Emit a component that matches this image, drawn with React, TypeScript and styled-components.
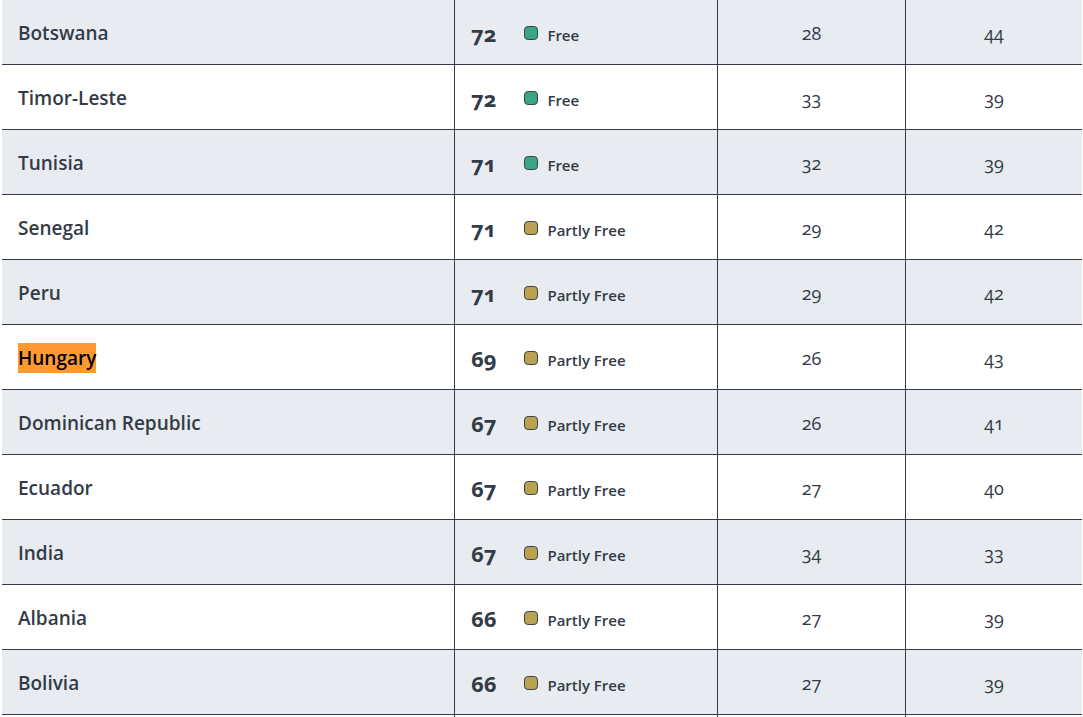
import React from 'react';
import styled, { createGlobalStyle } from 'styled-components';

type Status = 'Free' | 'Partly Free';

interface Row {
    country: string;
    score: number;
    status: Status;
    pr: number;
    cl: number;
    highlight?: boolean;
}

const rows: Row[] = [
    { country: 'Botswana', score: 72, status: 'Free', pr: 28, cl: 44 },
    { country: 'Timor-Leste', score: 72, status: 'Free', pr: 33, cl: 39 },
    { country: 'Tunisia', score: 71, status: 'Free', pr: 32, cl: 39 },
    { country: 'Senegal', score: 71, status: 'Partly Free', pr: 29, cl: 42 },
    { country: 'Peru', score: 71, status: 'Partly Free', pr: 29, cl: 42 },
    { country: 'Hungary', score: 69, status: 'Partly Free', pr: 26, cl: 43, highlight: true },
    { country: 'Dominican Republic', score: 67, status: 'Partly Free', pr: 26, cl: 41 },
    { country: 'Ecuador', score: 67, status: 'Partly Free', pr: 27, cl: 40 },
    { country: 'India', score: 67, status: 'Partly Free', pr: 34, cl: 33 },
    { country: 'Albania', score: 66, status: 'Partly Free', pr: 27, cl: 39 },
    { country: 'Bolivia', score: 66, status: 'Partly Free', pr: 27, cl: 39 },
];

const GlobalStyle = createGlobalStyle`
  html, body {
    margin: 0;
    padding: 0;
    background: #ffffff;
    overflow: hidden;
  }
  body {
    font-family: "Open Sans", "Noto Sans", sans-serif;
    color: #333b47;
  }
`;

const Table = styled.div`
  margin-left: 2px;
  width: 1080px;
`;

const TableRow = styled.div<{ $shaded: boolean }>`
  display: grid;
  grid-template-columns: 452px 263px 188px 177px;
  height: 65px;
  box-sizing: border-box;
  border-bottom: 1px solid #353c48;
  background: ${({ $shaded }) => ($shaded ? '#e8ebf0' : '#ffffff')};
`;

const Cell = styled.div<{ $divider?: boolean; $center?: boolean }>`
  display: flex;
  align-items: center;
  justify-content: ${({ $center }) => ($center ? 'center' : 'flex-start')};
  box-sizing: border-box;
  border-left: ${({ $divider }) => ($divider ? '1px solid #353c48' : 'none')};
`;

const CountryCell = styled(Cell)`
  padding: 2px 0 0 16px;
`;

const CountryName = styled.span<{ $highlight?: boolean }>`
  font-size: 19px;
  font-weight: 600;
  line-height: 30px;
  color: ${({ $highlight }) => ($highlight ? '#000000' : '#333b47')};
  background: ${({ $highlight }) => ($highlight ? '#ff9933' : 'transparent')};
`;

const ScoreCell = styled(Cell)`
  padding: 2px 0 0 16px;
`;

const Score = styled.span`
  font-size: 22px;
  font-weight: 700;
  font-variant-numeric: oldstyle-nums;
  margin-right: 28px;
`;

const StatusTag = styled.span`
  display: inline-flex;
  align-items: center;
  gap: 9px;
  font-size: 15px;
  font-weight: 600;
  padding-top: 4px;
`;

const Swatch = styled.span<{ $status: Status }>`
  width: 14px;
  height: 14px;
  box-sizing: border-box;
  border: 1px solid #3d4450;
  border-radius: 4px;
  margin-top: -5px;
  background: ${({ $status }) => ($status === 'Free' ? '#3aa784' : '#b9a350')};
`;

const Value = styled.span`
  font-size: 18px;
  font-weight: 400;
  font-variant-numeric: oldstyle-nums;
  padding-top: 2px;
`;

const App: React.FC = () => {
    return (
        <>
            <GlobalStyle />
            <Table>
                {rows.map((r, i) => (
                    <TableRow key={r.country} $shaded={i % 2 === 0}>
                        <CountryCell>
                            <CountryName $highlight={r.highlight}>{r.country}</CountryName>
                        </CountryCell>
                        <ScoreCell $divider>
                            <Score>{r.score}</Score>
                            <StatusTag>
                                <Swatch $status={r.status} />
                                {r.status}
                            </StatusTag>
                        </ScoreCell>
                        <Cell $divider $center>
                            <Value>{r.pr}</Value>
                        </Cell>
                        <Cell $divider $center>
                            <Value>{r.cl}</Value>
                        </Cell>
                    </TableRow>
                ))}
                {/* next row, cut off by the bottom edge */}
                <TableRow $shaded={false}>
                    <Cell />
                    <Cell $divider />
                    <Cell $divider />
                    <Cell $divider />
                </TableRow>
            </Table>
        </>
    );
};

export default App;
